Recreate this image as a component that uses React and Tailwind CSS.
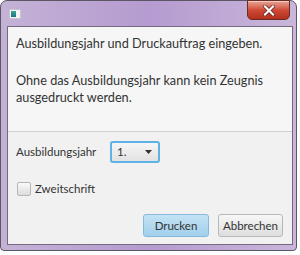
const font = { fontFamily: 'Lato, "Open Sans", sans-serif' };

function TitleBar() {
  return (
    <div className="relative h-[25px] flex items-start">
      {/* window icon */}
      <div className="mt-[8px] ml-[2px] w-[12px] h-[10px] border border-[#c9c3cf] bg-[#f4f4f4] flex items-center pl-[1px]">
        <div className="w-[5px] h-[6px] bg-gradient-to-b from-[#3aa890] to-[#1d6f8a]" />
      </div>
      {/* close button */}
      <div className="absolute right-[3px] top-[-1px] w-[43px] h-[20px] rounded-b-[5px] border border-[#6b2a22] bg-gradient-to-b from-[#e6a596] via-[#cf4a36] to-[#b22f1e] flex items-center justify-center shadow-[inset_0_1px_0_rgba(255,255,255,0.45)]">
        <svg width="12" height="11" viewBox="0 0 12 11">
          <path d="M2 1.5 L10 9.5 M10 1.5 L2 9.5" stroke="#5a1a12" strokeWidth="3.6" strokeLinecap="square" />
          <path d="M2 1.5 L10 9.5 M10 1.5 L2 9.5" stroke="#ffffff" strokeWidth="2.2" strokeLinecap="square" />
        </svg>
      </div>
    </div>
  );
}

export default function App() {
  return (
    <div className="w-[300px] h-[255px] bg-white" style={font}>
      <div className="w-[297px] h-[251px] rounded-t-[7px] rounded-b-[4px] border border-[#5d5563] bg-gradient-to-r from-[#c4b2d6] via-[#b59bd0] to-[#c9b6da] flex flex-col pl-[6px] pr-[3px] pb-[5px]">
        <TitleBar />
        <div className="flex-1 border border-[#776a80] bg-[#f1f1f1] flex flex-col text-[#333333]">
          {/* header */}
          <div className="h-[105px] bg-[#f6f6f6] border-b border-[#cfcfcf] pl-[8px] pt-[8px] text-[12.7px] leading-[17px]">
            <p>Ausbildungsjahr und Druckauftrag eingeben.</p>
            <p className="mt-[20px]">Ohne das Ausbildungsjahr kann kein Zeugnis<br />ausgedruckt werden.</p>
          </div>
          {/* form */}
          <div className="flex-1 flex flex-col pl-[8px] pr-[9px] pt-[9px] text-[11.5px]">
            <div className="flex items-start">
              <span className="w-[94px] mt-[2px] leading-[17px]">Ausbildungsjahr</span>
              <div className="w-[50px] h-[22px] rounded-[3px] border-2 border-[#5eb2e6] bg-gradient-to-b from-[#f6f6f6] to-[#e2e2e2] flex items-center justify-between pl-[5px] pr-[6px]">
                <span className="leading-none">1.</span>
                <svg width="7" height="4" viewBox="0 0 7 4">
                  <path d="M0 0 L7 0 L3.5 4 Z" fill="#333333" />
                </svg>
              </div>
            </div>
            <div className="flex items-center mt-[17px] ml-[1px]">
              <div className="w-[14px] h-[14px] rounded-[2px] border border-[#b5b5b5] bg-gradient-to-b from-[#fafafa] to-[#dcdcdc]" />
              <span className="ml-[4px] leading-[17px]">Zweitschrift</span>
            </div>
            <div className="flex justify-end gap-[9px] mt-[17px]">
              <button className="w-[66px] h-[23px] rounded-[3px] border border-[#86b9dc] bg-gradient-to-b from-[#c3e2f4] to-[#a2d0ec] text-[11.5px] text-[#333333]">
                Drucken
              </button>
              <button className="w-[65px] h-[23px] rounded-[3px] border border-[#b8b8b8] bg-gradient-to-b from-[#f7f7f7] to-[#dedede] text-[11.5px] text-[#333333]">
                Abbrechen
              </button>
            </div>
          </div>
        </div>
      </div>
    </div>
  );
}
